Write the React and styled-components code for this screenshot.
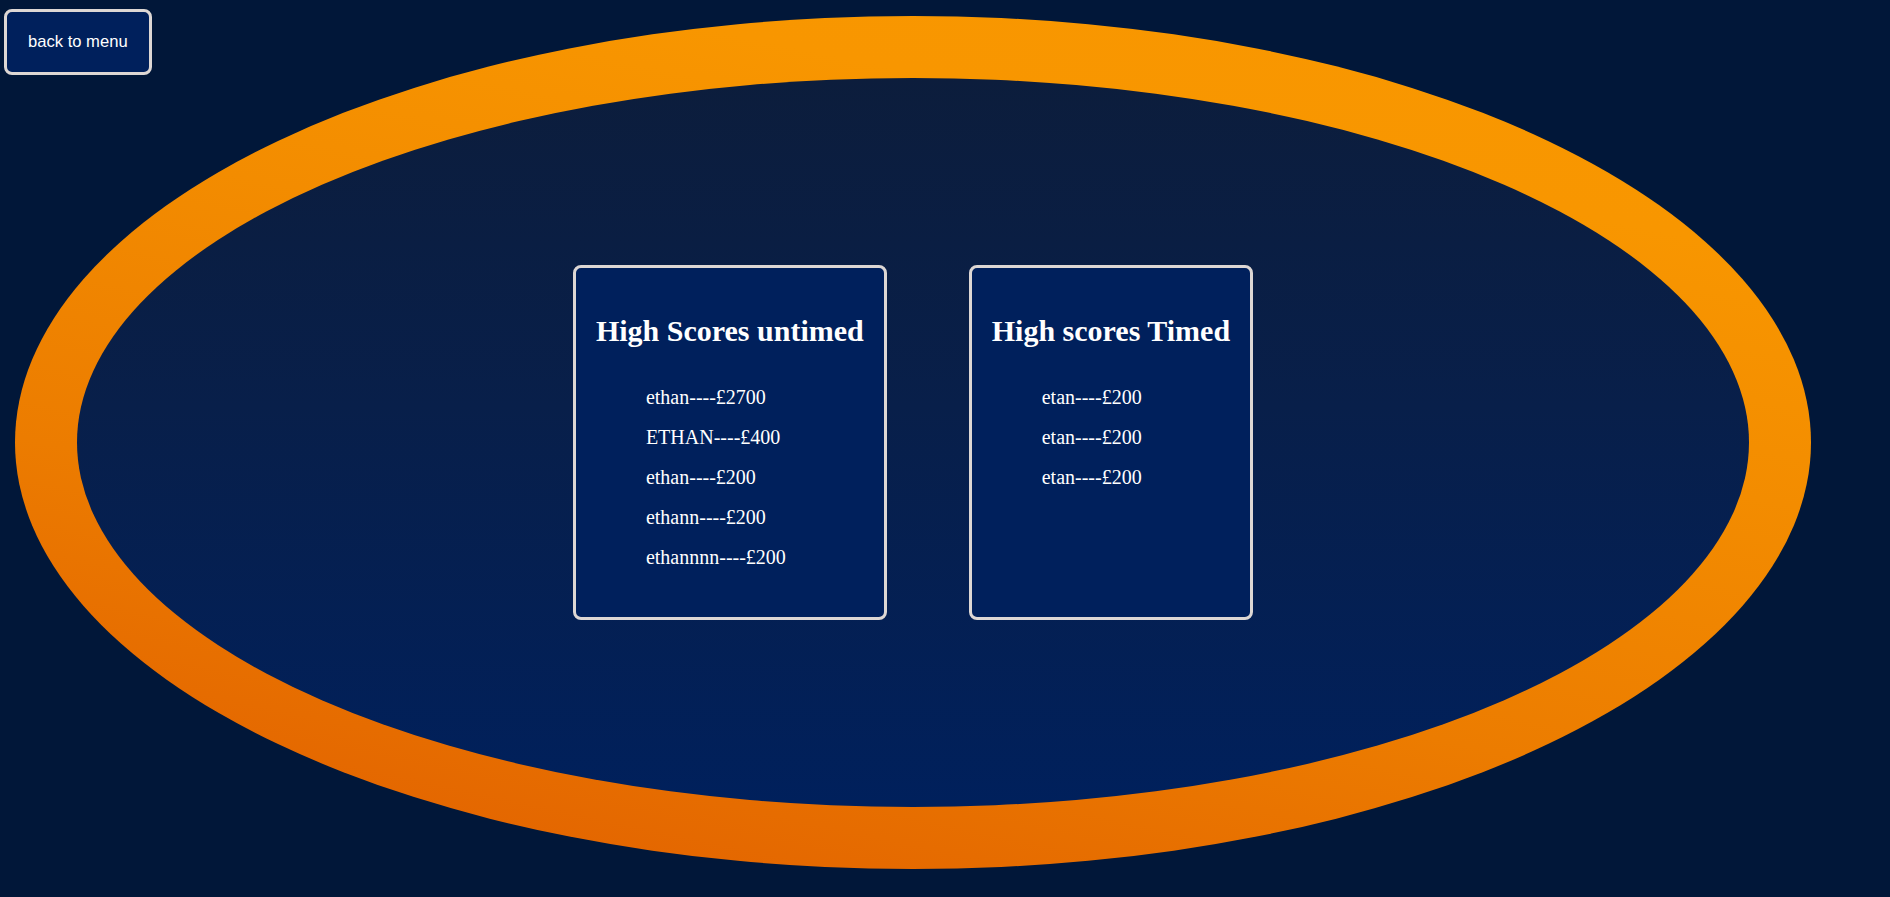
import React from 'react'
import styled, { createGlobalStyle } from 'styled-components'

const untimed = [
  { id: 1, name: 'ethan', score: 2700 },
  { id: 2, name: 'ETHAN', score: 400 },
  { id: 3, name: 'ethan', score: 200 },
  { id: 4, name: 'ethann', score: 200 },
  { id: 5, name: 'ethannnn', score: 200 },
]

const timed = [
  { id: 1, name: 'etan', score: 200 },
  { id: 2, name: 'etan', score: 200 },
  { id: 3, name: 'etan', score: 200 },
]

const GlobalStyle = createGlobalStyle`
  html, body {
    margin: 0;
    padding: 0;
    background: #011739;
  }
  body {
    width: 1890px;
    height: 897px;
    overflow: hidden;
    font-family: "Liberation Serif", "Times New Roman", serif;
    color: #fff;
  }
`

const Page = styled.main`
  position: relative;
  width: 1890px;
  height: 897px;
  padding: 16px 0 0 15px;
  box-sizing: border-box;
`

const BackButton = styled.button`
  position: absolute;
  top: 9px;
  left: 4px;
  padding: 20px 21px;
  background: #00205c;
  color: #fff;
  border: 3px solid #ddd7d4;
  border-radius: 8px;
  font-family: "Liberation Sans", Arial, sans-serif;
  font-size: 16.6px;
  line-height: 20px;
  cursor: pointer;
`

const Ring = styled.section`
  width: 1796px;
  height: 853px;
  box-sizing: border-box;
  padding: 62px;
  border-radius: 50%;
  background: linear-gradient(12deg, #e05c00 0%, #ec7c00 35%, #f38c00 60%, #f89600 80%, #f99800 100%);
  display: flex;
`

const Table = styled.div`
  flex: 1;
  border-radius: 50%;
  background: linear-gradient(to bottom, #0c1d3c 0%, #081f4a 45%, #00205c 100%);
  display: flex;
  justify-content: center;
  align-items: center;
`

const Boards = styled.div`
  display: flex;
  align-items: stretch;
  gap: 82px;
`

const Card = styled.div`
  border: 3px solid #ddd7d4;
  border-radius: 8px;
  background: #00205c;
  padding: 0 20px 20px;
`

const Title = styled.h2`
  margin: 43px 0 0;
  font-size: 30px;
  line-height: 40px;
  font-weight: bold;
  white-space: nowrap;
`

const ScoreList = styled.ul`
  list-style: none;
  margin: 26px 0 20px;
  padding-left: 50px;
`

const ScoreRow = styled.li`
  font-size: 20px;
  line-height: 40px;
  white-space: nowrap;
`

const ScoreCard = ({ title, scores }) => (
  <Card>
    <Title>{title}</Title>
    <ScoreList>
      {scores.map(s => (
        <ScoreRow key={s.id}>
          {s.name}----£{s.score}
        </ScoreRow>
      ))}
    </ScoreList>
  </Card>
)

export default function App() {
  return (
    <>
      <GlobalStyle />
      <Page>
        <Ring>
          <Table>
            <Boards>
              <ScoreCard title="High Scores untimed" scores={untimed} />
              <ScoreCard title="High scores Timed" scores={timed} />
            </Boards>
          </Table>
        </Ring>
        <BackButton>back to menu</BackButton>
      </Page>
    </>
  )
}
